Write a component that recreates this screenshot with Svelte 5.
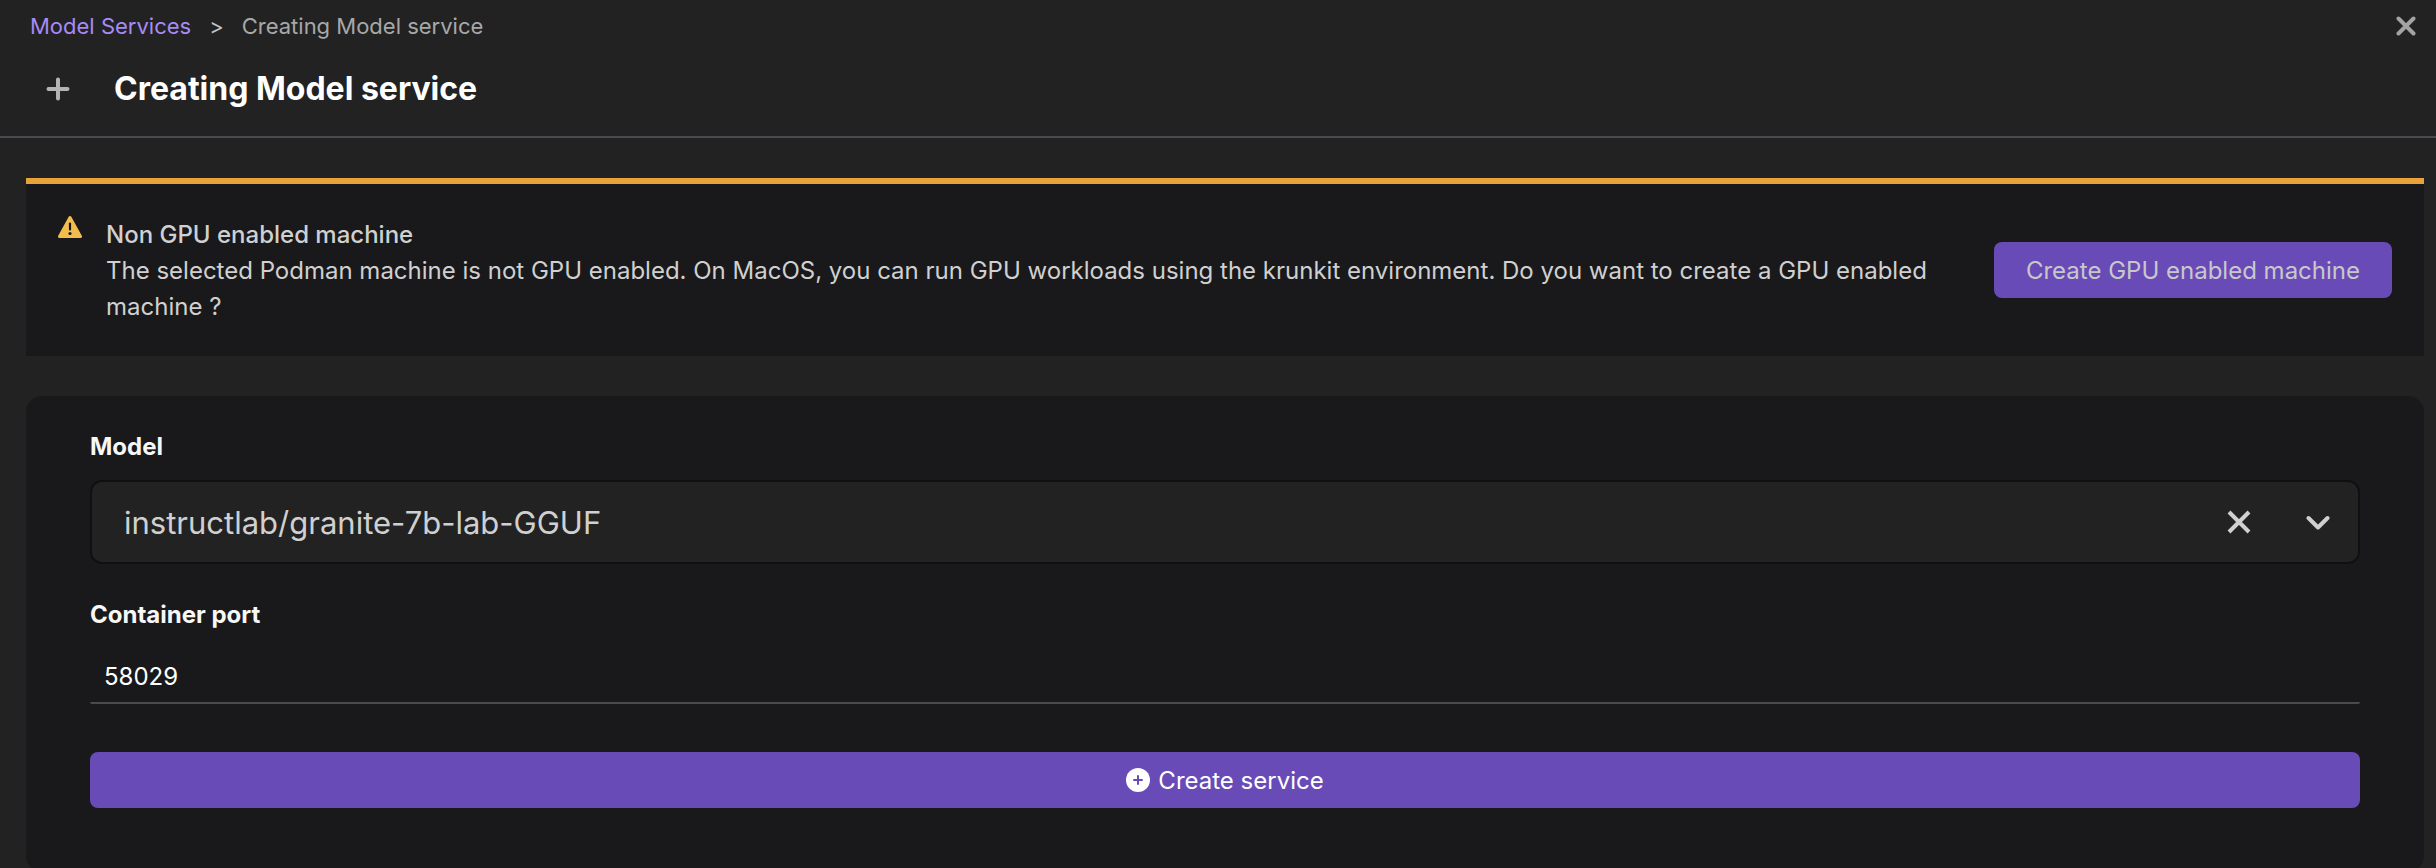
<script>
  let models = ['instructlab/granite-7b-lab-GGUF'];
  let model = $state('instructlab/granite-7b-lab-GGUF');
  let port = $state('58029');
</script>

<div class="page">
  <header>
    <div class="topbar">
      <nav aria-label="Breadcrumb">
        <a href="#services">Model Services</a>
        <span class="sep">&gt;</span>
        <span class="current">Creating Model service</span>
      </nav>
      <button class="icon-button close" aria-label="Close">
        <svg width="20" height="20" viewBox="0 0 20 20"><path d="M2.500 2.500l15 15M17.500 2.500l-15 15" /></svg>
      </button>
    </div>
    <div class="heading">
      <svg width="24" height="24" viewBox="0 0 24 24"><path d="M12 2.500v19M2.500 12h19" /></svg>
      <h1>Creating Model service</h1>
    </div>
  </header>

  <main>
    <section class="alert" role="alert">
      <svg class="warning" width="24" height="24" viewBox="0 0 24 24">
        <path d="M12 2.500L22.500 21.500H1.500Z" fill="#f2bd4c" stroke="#f2bd4c" stroke-width="3" stroke-linejoin="round" />
        <path d="M12 8.500v6" stroke="#19191b" stroke-width="2.200" stroke-linecap="round" />
        <circle cx="12" cy="18.500" r="1.600" fill="#19191b" />
      </svg>
      <div class="message">
        <h2>Non GPU enabled machine</h2>
        <p>The selected Podman machine is not GPU enabled. On MacOS, you can run GPU workloads using the krunkit environment. Do you want to create a GPU enabled machine ?</p>
      </div>
      <button class="primary muted"><span>Create GPU enabled machine</span></button>
    </section>

    <form class="card" onsubmit={(e) => e.preventDefault()}>
      <label for="model">Model</label>
      <div class="select">
        <select id="model" bind:value={model}>
          {#each models as name}
            <option value={name}>{name}</option>
          {/each}
        </select>
        <div class="indicators">
          <button type="button" class="icon-button clear" aria-label="Clear model" onclick={() => (model = '')}>
            <svg width="24" height="24" viewBox="0 0 24 24"><path d="M2 2l20 20M22 2L2 22" /></svg>
          </button>
          <svg class="chevron" width="24" height="24" viewBox="0 0 24 24"><path d="M2.500 8L12 17.500L21.500 8" /></svg>
        </div>
      </div>

      <label for="port">Container port</label>
      <input id="port" type="text" inputmode="numeric" bind:value={port} />

      <button type="submit" class="primary">
        <svg width="24" height="24" viewBox="0 0 24 24">
          <circle cx="12" cy="12" r="12" fill="#fff" />
          <path d="M12 8v8M8 12h8" stroke="#694bb8" stroke-width="2" stroke-linecap="round" />
        </svg>
        <span>Create service</span>
      </button>
    </form>
  </main>
</div>

<style>
  :global(body) {
    margin: 0;
    background: #222222;
  }

  .page {
    display: flex;
    flex-direction: column;
    height: 100vh;
    box-sizing: border-box;
    font-family: Inter, 'Liberation Sans', sans-serif;
    font-size: 24px;
    line-height: 36px;
    color: #d0d0d0;
  }

  svg {
    display: block;
    flex: none;
    fill: none;
  }

  button,
  input,
  select {
    font: inherit;
    margin: 0;
    border: 0;
  }

  h1,
  h2,
  p {
    margin: 0;
  }

  header {
    flex: none;
    border-bottom: 2px solid #4a4950;
    padding: 8px 20px 20px 30px;
  }

  .topbar {
    display: flex;
    align-items: center;
    justify-content: space-between;
  }

  nav {
    display: flex;
    gap: 18px;
    font-size: 22px;
    color: #a8a8a8;
  }

  nav a {
    color: #a78bf6;
    text-decoration: none;
  }

  .sep {
    color: #c4c4c4;
  }

  .icon-button {
    padding: 0;
    background: none;
    cursor: pointer;
  }

  .close svg {
    stroke: #a3a3a3;
    stroke-width: 4;
    stroke-linecap: round;
  }

  .heading {
    display: flex;
    align-items: center;
    gap: 44px;
    padding: 25px 0 7px 16px;
  }

  .heading svg {
    stroke: #b4b4b4;
    stroke-width: 4;
    stroke-linecap: round;
  }

  h1 {
    font-size: 32px;
    line-height: 40px;
    font-weight: 700;
    color: #fff;
  }

  main {
    flex: 1;
    min-height: 0;
    display: flex;
    flex-direction: column;
    gap: 40px;
    padding: 40px 12px 0 26px;
    overflow-y: auto;
    scrollbar-width: none;
  }

  .alert {
    flex: none;
    display: flex;
    align-items: center;
    border-top: 6px solid #e8a13b;
    background: #19191b;
    padding: 31px 32px;
  }

  .warning {
    align-self: flex-start;
  }

  .message {
    flex: 1;
    padding: 2px 64px 0 24px;
  }

  h2 {
    font-size: 24px;
    line-height: 36px;
    font-weight: 500;
  }

  .primary {
    display: flex;
    align-items: center;
    justify-content: center;
    gap: 8px;
    padding: 9px 32px;
    border-radius: 8px;
    background: #694bb8;
    color: #fff;
    cursor: pointer;
  }

  .primary span {
    padding-top: 2px;
  }

  .muted {
    color: #c8c8c8;
  }

  .card {
    flex: none;
    display: flex;
    flex-direction: column;
    border-radius: 16px;
    background: #19191b;
    padding: 33px 64px 64px;
  }

  label {
    font-weight: 700;
    color: #f7f7f7;
  }

  .select {
    display: grid;
    align-items: center;
    margin: 15px 0 33px;
  }

  select {
    grid-area: 1 / 1;
    appearance: none;
    width: 100%;
    height: 84px;
    padding: 2px 160px 0 32px;
    border: 2px solid #101011;
    border-radius: 12px;
    background: #222222;
    color: #d0d0d0;
    font-size: 31px;
  }

  .indicators {
    grid-area: 1 / 1;
    justify-self: end;
    display: flex;
    align-items: center;
    gap: 55px;
    padding-right: 30px;
    pointer-events: none;
  }

  .indicators svg {
    stroke: #d0d0d0;
    stroke-width: 4;
    stroke-linejoin: round;
  }

  .clear {
    pointer-events: auto;
  }

  .chevron {
    stroke-linecap: round;
  }

  input {
    margin: 17px 0 48px;
    padding: 9px 14px 7px;
    border-bottom: 2px solid #4b4b4d;
    border-radius: 2px;
    background: transparent;
    color: #fff;
    outline: none;
  }
</style>
